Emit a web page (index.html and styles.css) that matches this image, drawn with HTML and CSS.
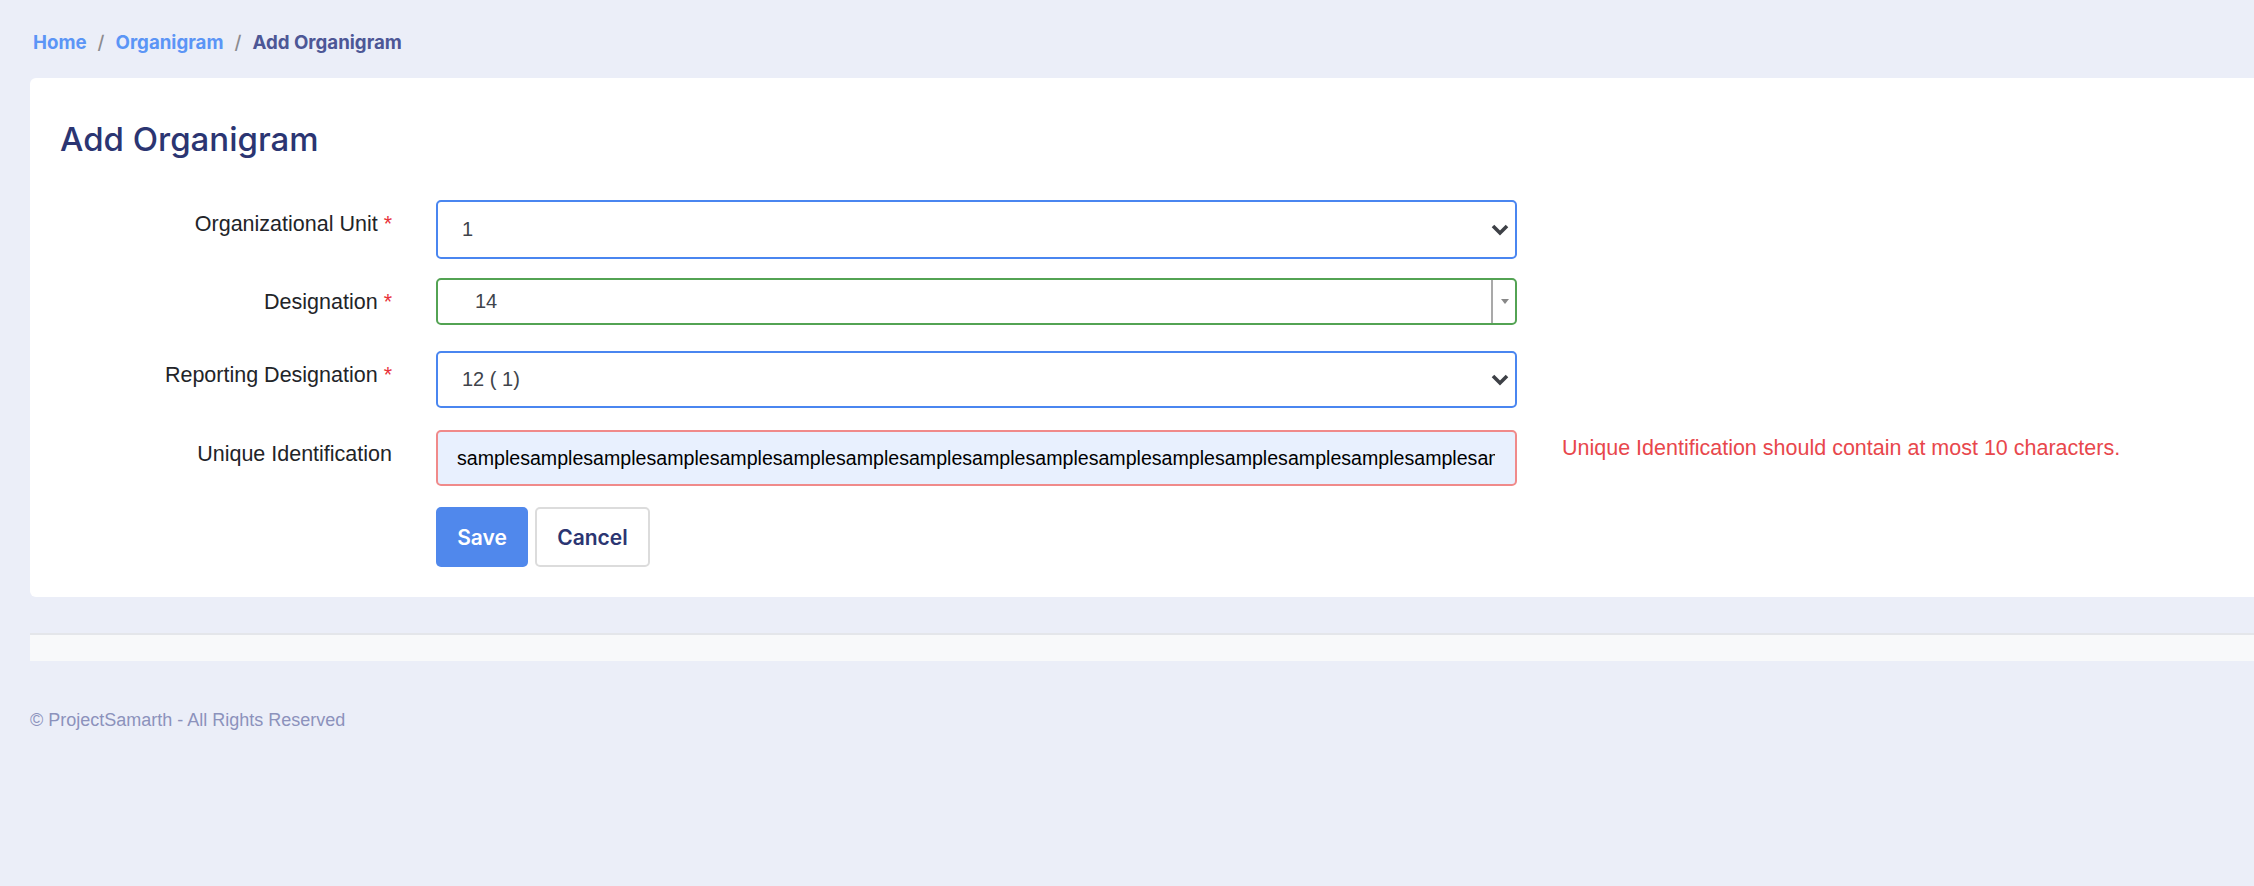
FILE: index.html
```html
<!DOCTYPE html>
<html lang="en">
<head>
<meta charset="utf-8">
<title>Add Organigram</title>
<link rel="stylesheet" href="styles.css">
</head>
<body>
<nav class="breadcrumb">
  <a class="crumb-link" href="#">Home</a><span class="sep">/</span><a class="crumb-link" href="#">Organigram</a><span class="sep">/</span><span class="crumb-current">Add Organigram</span>
</nav>
<main class="card">
  <h1 class="title">Add Organigram</h1>
  <form class="form">
    <div class="row row-unit">
      <label class="label">Organizational Unit <span class="req">*</span></label>
      <div class="control select">
        <span class="value">1</span>
        <svg class="chevron" width="18" height="12" viewBox="0 0 18 12"><polyline points="2,2 9,9 16,2" fill="none" stroke="#3e4147" stroke-width="3.6" stroke-linecap="butt" stroke-linejoin="miter"/></svg>
      </div>
    </div>
    <div class="row row-desig">
      <label class="label">Designation <span class="req">*</span></label>
      <div class="control select2">
        <span class="value">14</span>
        <span class="s2-arrow"><span class="tri"></span></span>
      </div>
    </div>
    <div class="row row-report">
      <label class="label">Reporting Designation <span class="req">*</span></label>
      <div class="control select">
        <span class="value">12 ( 1)</span>
        <svg class="chevron" width="18" height="12" viewBox="0 0 18 12"><polyline points="2,2 9,9 16,2" fill="none" stroke="#3e4147" stroke-width="3.6" stroke-linecap="butt" stroke-linejoin="miter"/></svg>
      </div>
    </div>
    <div class="row row-uid">
      <label class="label">Unique Identification</label>
      <div class="control input-invalid">
        <input class="input-text" type="text" value="samplesamplesamplesamplesamplesamplesamplesamplesamplesamplesamplesamplesamplesamplesamplesamplesamplesample" readonly>
      </div>
      <div class="error">Unique Identification should contain at most 10 characters.</div>
    </div>
    <div class="row row-actions">
      <div class="label"></div>
      <div class="actions">
        <button type="button" class="btn btn-save">Save</button>
        <button type="button" class="btn btn-cancel">Cancel</button>
      </div>
    </div>
  </form>
</main>
<div class="bar"></div>
<footer class="footer">© ProjectSamarth - All Rights Reserved</footer>
</body>
</html>
```

FILE: styles.css
```css
* { box-sizing: border-box; }
html, body { margin: 0; padding: 0; }
body {
  background: #ebeef8;
  font-family: "Liberation Sans", Arial, sans-serif;
  width: 2254px;
  overflow: hidden;
}
.breadcrumb {
  margin: 31px 0 0 33px;
  height: 24px;
  font-family: Inter, "Liberation Sans", sans-serif;
  font-weight: 700;
  font-size: 18.7px;
  line-height: 24px;
  display: flex;
  align-items: center;
}
.crumb-link { color: #5b95f6; text-decoration: none; }
.sep { color: #8b8b8f; padding: 0 11px; font-weight: 500; }
.crumb-current { color: #4d5796; }

.card {
  margin: 23px 0 0 30px;
  background: #ffffff;
  border-radius: 6px 0 0 6px;
  padding: 41px 0 30px 30px;
}
.title {
  margin: 0 0 41px 0;
  font-family: Inter, "Liberation Sans", sans-serif;
  font-weight: 500;
  font-size: 33px;
  line-height: 40px;
  color: #2b3572;
}
.form { display: flex; flex-direction: column; }
.row { display: flex; align-items: flex-start; }
.row-unit { margin-bottom: 19px; }
.row-desig { margin-bottom: 26px; }
.row-report { margin-bottom: 22px; }
.row-uid { margin-bottom: 21px; }

.label {
  width: 332px;
  flex: none;
  text-align: right;
  font-size: 21.5px;
  line-height: 24px;
  padding-top: 12px;
  color: #222428;
}
.req { color: #e8333a; }
.control {
  margin-left: 44px;
  width: 1081px;
  flex: none;
  border: 2px solid #4a86f0;
  border-radius: 5px;
  display: flex;
  align-items: center;
  font-size: 20px;
  color: #40444b;
  background: #fff;
}
.select { height: 59px; padding: 0 6px 0 24px; justify-content: space-between; }
.row-report .select { height: 57px; }
.chevron { display: block; margin-top: 1px; }
.select2 {
  height: 47px;
  border-color: #53a353;
  padding-left: 37px;
  justify-content: space-between;
}
.s2-arrow {
  align-self: stretch;
  width: 24px;
  border-left: 2px solid #a9a9a9;
  display: flex;
  align-items: center;
  justify-content: center;
}
.tri {
  width: 0; height: 0;
  border-left: 4px solid transparent;
  border-right: 4px solid transparent;
  border-top: 5px solid #888888;
  margin-left: 2px;
}
.input-invalid {
  height: 56px;
  border-color: #f08a8a;
  background: #e8f0fe;
  padding: 0 20px 0 19px;
}
.input-text {
  width: 100%;
  border: none;
  outline: none;
  background: transparent;
  padding: 0;
  margin: 0;
  color: #000;
  font-family: "Liberation Sans", Arial, sans-serif;
  font-size: 19.6px;
  line-height: 24px;
  height: 24px;
}
.error {
  margin-left: 45px;
  padding-top: 6px;
  font-size: 21.5px;
  line-height: 24px;
  color: #e8474c;
  white-space: nowrap;
}
.actions { margin-left: 44px; display: flex; gap: 7px; }
.btn {
  height: 60px;
  border-radius: 5px;
  font-family: Inter, "Liberation Sans", sans-serif;
  font-size: 21px;
  font-weight: 600;
  cursor: pointer;
}
.btn-save {
  width: 92px;
  background: #5088ec;
  border: none;
  color: #ffffff;
}
.btn-cancel {
  width: 115px;
  background: #ffffff;
  border: 2px solid #dcdcdc;
  color: #2b3572;
}
.bar {
  margin: 36px 0 0 30px;
  height: 28px;
  background: #f8f9fa;
  border-top: 2px solid #e4e6ea;
}
.footer {
  margin: 47px 0 0 30px;
  font-size: 18px;
  line-height: 24px;
  color: #8c92bc;
}
```
